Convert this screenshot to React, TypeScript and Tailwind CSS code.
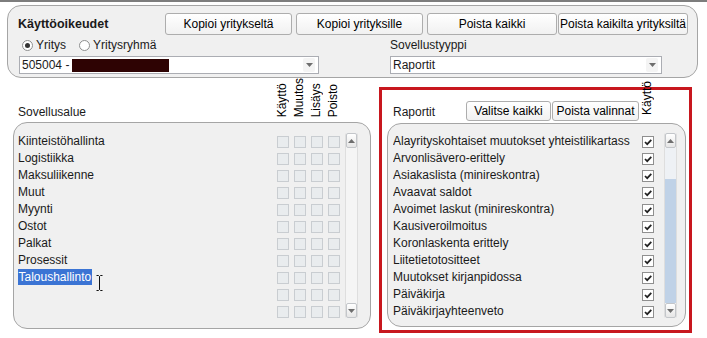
import React from 'react';

const leftItems = [
  'Kiinteistöhallinta',
  'Logistiikka',
  'Maksuliikenne',
  'Muut',
  'Myynti',
  'Ostot',
  'Palkat',
  'Prosessit',
  'Taloushallinto',
  '',
  '',
];

const rightItems = [
  'Alayrityskohtaiset muutokset yhteistilikartassa',
  'Arvonlisävero-erittely',
  'Asiakaslista (minireskontra)',
  'Avaavat saldot',
  'Avoimet laskut (minireskontra)',
  'Kausiveroilmoitus',
  'Koronlaskenta erittely',
  'Liitetietotositteet',
  'Muutokset kirjanpidossa',
  'Päiväkirja',
  'Päiväkirjayhteenveto',
];

const Btn = ({ className, children }: { className: string; children: React.ReactNode }) => (
  <button
    className={`flex items-center justify-center rounded-[3px] border border-[#adadad] bg-gradient-to-b from-white to-[#f1f1f1] text-[12px] text-black ${className}`}
  >
    {children}
  </button>
);

const Arrow = ({ up }: { up?: boolean }) => (
  <svg width="7" height="4" viewBox="0 0 7 4">
    <path d={up ? 'M0 4 L3.5 0 L7 4 Z' : 'M0 0 L7 0 L3.5 4 Z'} fill="#6e6e6e" />
  </svg>
);

const Dropdown = ({ className, children }: { className: string; children: React.ReactNode }) => (
  <div className={`flex h-[18px] items-center border border-[#abadb3] bg-white pl-[2px] text-[12px] text-[#1a1a1a] ${className}`}>
    <div className="flex flex-1 items-center">{children}</div>
    <div className="mr-[3px] flex h-[14px] w-[12px] items-center justify-center rounded-[2px] bg-[#f4f4f4]">
      <Arrow />
    </div>
  </div>
);

const Radio = ({ checked, label }: { checked?: boolean; label: string }) => (
  <div className="flex items-center">
    <div className="flex h-[11px] w-[11px] items-center justify-center rounded-full border border-[#8e8f8f] bg-white">
      {checked && <div className="h-[5px] w-[5px] rounded-full bg-[#333]" />}
    </div>
    <span className="ml-[3px] text-[12px] text-[#1a1a1a]">{label}</span>
  </div>
);

const ScrollBtn = ({ up }: { up?: boolean }) => (
  <div className="flex h-[15px] w-full items-center justify-center rounded-[2px] border border-[#c3c6ca] bg-gradient-to-b from-white to-[#e6e6e6]">
    <Arrow up={up} />
  </div>
);

const Scrollbar = ({ blue }: { blue?: boolean }) => (
  <div className="flex h-[185px] w-[13px] flex-col rounded-[2px] border-x border-[#dedede] bg-[#f5f5f5]">
    <ScrollBtn up />
    {blue ? (
      <div className="flex flex-1 flex-col">
        <div className="h-[31px] bg-[#eef1f5]" />
        <div className="flex-1 bg-[#c0d2e7]" />
      </div>
    ) : (
      <div className="flex-1" />
    )}
    <ScrollBtn />
  </div>
);

const GreyBox = () => <div className="h-[12px] w-[12px] border border-[#c9cdd1] bg-[#e9ecee]" />;

const CheckedBox = () => (
  <div className="flex h-[12px] w-[12px] items-center justify-center border border-[#8f8f8f] bg-white">
    <svg width="10" height="10" viewBox="0 0 10 10">
      <path d="M2 5 L4.2 7.2 L8.3 2.8" fill="none" stroke="#222" strokeWidth="1.7" />
    </svg>
  </div>
);

const VLabel = ({ children }: { children: React.ReactNode }) => (
  <div className="flex w-[17px] justify-center">
    <span className="rotate-180 text-[12px] leading-[13px] text-black [writing-mode:vertical-rl]">{children}</span>
  </div>
);

export default function App() {
  return (
    <div className="h-[338px] w-[707px] overflow-hidden bg-white font-['Liberation_Sans',Arial,sans-serif]">
      <div className="h-[2px] bg-[#7d7d7d]" />

      {/* top panel */}
      <div className="ml-[7px] mt-[3px] h-[73px] w-[691px] rounded-[14px] border border-[#a5a5a5] bg-[#f0f0f0] pl-[10px] pt-[7px]">
        <div className="flex h-[22px] items-center">
          <div className="w-[147px] text-[12.5px] font-bold text-[#1a1a1a]">Käyttöoikeudet</div>
          <Btn className="h-[22px] w-[127px]">Kopioi yritykseltä</Btn>
          <Btn className="ml-[4px] h-[22px] w-[127px]">Kopioi yrityksille</Btn>
          <Btn className="ml-[4px] h-[22px] w-[130px]">Poista kaikki</Btn>
          <Btn className="ml-[1px] h-[22px] w-[130px]">Poista kaikilta yrityksiltä</Btn>
        </div>
        <div className="mt-[3px] flex">
          <div className="ml-[1px] w-[300px]">
            <div className="flex h-[14px] items-center pl-[3px]">
              <Radio checked label="Yritys" />
              <div className="ml-[13px]">
                <Radio label="Yritysryhmä" />
              </div>
            </div>
            <Dropdown className="mt-[4px] w-[300px]">
              <span>505004 -</span>
              <div className="ml-[3px] h-[13px] w-[97px] bg-[#2e0303]" />
            </Dropdown>
          </div>
          <div className="ml-[71px] w-[272px]">
            <div className="flex h-[14px] items-center text-[12px] text-[#1a1a1a]">Sovellustyyppi</div>
            <Dropdown className="mt-[4px] w-[272px]">
              <span>Raportit</span>
            </Dropdown>
          </div>
        </div>
      </div>

      <div className="flex">
        {/* left: Sovellusalue */}
        <div className="ml-[13px] w-[358px]">
          <div className="flex h-[44px] items-end">
            <div className="w-[261px] pb-[1px] pl-[5px] text-[12px] text-[#1a1a1a]">Sovellusalue</div>
            <div className="flex pb-[5px]">
              <VLabel>Käyttö</VLabel>
              <VLabel>Muutos</VLabel>
              <VLabel>Lisäys</VLabel>
              <VLabel>Poisto</VLabel>
            </div>
          </div>
          <div className="flex h-[207px] rounded-[14px] border border-[#a5a5a5] bg-[#f0f0f0] pl-[4px] pr-[12px] pt-[10px]">
            <div className="w-[324px]">
              {leftItems.map((item, i) => (
                <div key={i} className="flex h-[17px] items-center">
                  <div className="relative flex-1 text-[12px] leading-[17px] text-[#1a1a1a]">
                    {item === 'Taloushallinto' ? (
                      <>
                        <span className="bg-[#3b74d4] px-[0.5px] py-[1px] text-white">{item}</span>
                        <svg className="absolute left-[78px] top-[6px]" width="7" height="16" viewBox="0 0 7 16">
                          <path d="M0.5 0.5 H2.5 L3.5 1.5 L4.5 0.5 H6.5 M3.5 1.5 V14.5 M0.5 15.5 H2.5 L3.5 14.5 L4.5 15.5 H6.5" fill="none" stroke="#111" strokeWidth="1" />
                        </svg>
                      </>
                    ) : (
                      item
                    )}
                  </div>
                  {[0, 1, 2, 3].map((c) => (
                    <div key={c} className="flex w-[17px] justify-center">
                      <GreyBox />
                    </div>
                  ))}
                </div>
              ))}
            </div>
            <div className="ml-[3px]">
              <Scrollbar />
            </div>
          </div>
        </div>

        {/* right: Raportit (red frame) */}
        <div className="ml-[8px] mt-[9px] h-[246px] w-[313px] border-[3px] border-[#c8171e]">
          <div className="flex h-[33px] items-end">
            <div className="w-[84px] pb-[2px] pl-[11px] text-[12px] text-[#1a1a1a]">Raportit</div>
            <Btn className="mb-[2px] h-[20px] w-[85px]">Valitse kaikki</Btn>
            <Btn className="mb-[2px] ml-[1px] h-[20px] w-[87px]">Poista valinnat</Btn>
            <div className="relative z-10 pb-[8px]">
              <VLabel>Käyttö</VLabel>
            </div>
          </div>
          <div className="ml-[5px] flex h-[204px] w-[299px] rounded-[14px] border border-[#a5a5a5] bg-[#f0f0f0] pl-[5px] pr-[8px] pt-[9px]">
            <div className="w-[263px]">
              {rightItems.map((item) => (
                <div key={item} className="flex h-[17px] items-center">
                  <div className="w-[237px] overflow-hidden whitespace-nowrap text-[12px] leading-[17px] text-[#1a1a1a]">{item}</div>
                  <div className="w-[9px]" />
                  <div className="flex w-[17px] justify-center">
                    <CheckedBox />
                  </div>
                </div>
              ))}
            </div>
            <div className="ml-[8px]">
              <Scrollbar blue />
            </div>
          </div>
        </div>
      </div>
    </div>
  );
}
